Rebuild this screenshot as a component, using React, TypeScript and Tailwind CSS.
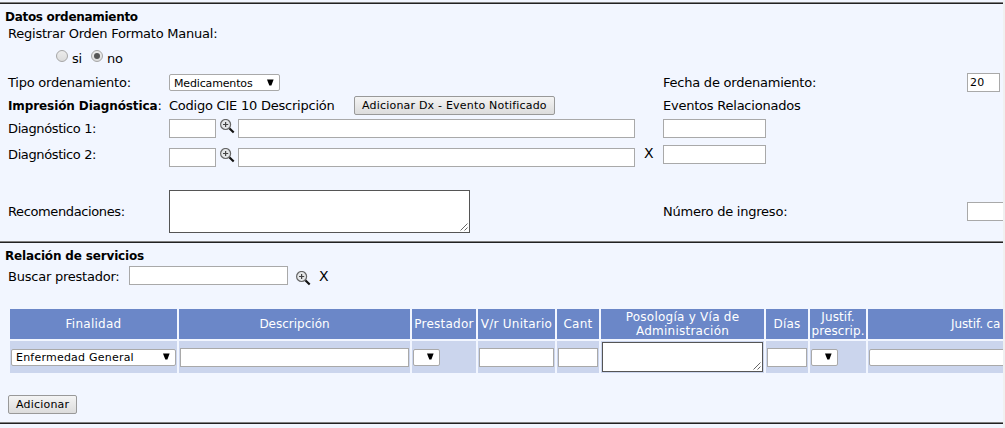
import React from "react";

const field = "block shrink-0 h-[19px] border border-[#a9a9a9] bg-white outline-none px-[2px] text-[11px]";

function Field({ className = "", value }: { className?: string; value?: string }) {
  return <input type="text" defaultValue={value} className={`${field} ${className}`} />;
}

function Picker({ label, className = "" }: { label?: string; className?: string }) {
  return (
    <button
      type="button"
      className={`flex h-[17px] shrink-0 items-center justify-between overflow-hidden rounded-[2px] border border-[#a9a9a9] bg-white pl-1 text-[11px] leading-none whitespace-nowrap ${className}`}
    >
      <span className="pt-px">{label}</span>
      <svg width="7" height="7" viewBox="0 0 7 7" className="mr-[5px] mb-px shrink-0">
        <path d="M0 0.5h6.6L4.4 6.5H2.3z" fill="#000" />
      </svg>
    </button>
  );
}

function TextBox({ className = "" }: { className?: string }) {
  return (
    <div className={`flex shrink-0 items-end justify-end border border-[#555] bg-white p-px ${className}`}>
      <svg width="8" height="8" viewBox="0 0 8 8">
        <path d="M0.5 7.5l7-7M4.5 7.5l3-3" stroke="#666" strokeWidth="1" fill="none" />
      </svg>
    </div>
  );
}

function PushButton({ children, className = "" }: { children: React.ReactNode; className?: string }) {
  return (
    <button
      type="button"
      className={`h-[19px] shrink-0 rounded-[2px] border border-[#999] bg-linear-to-b from-[#f4f4f4] to-[#dcdcdc] pt-px pl-[7px] text-left text-[11px] leading-4 tracking-[0.2px] whitespace-nowrap ${className}`}
    >
      {children}
    </button>
  );
}

function Magnifier({ className = "" }: { className?: string }) {
  return (
    <svg width="15" height="15" viewBox="0 0 15 15" className={`shrink-0 ${className}`}>
      <path d="M9.3 9.3l4.4 4.2" stroke="#111" strokeWidth="2.2" />
      <circle cx="5.6" cy="5.5" r="5" fill="#e4e6e8" stroke="#666" strokeWidth="1.2" />
      <path d="M5.6 2.9v5.2M3 5.5h5.2" stroke="#444" strokeWidth="1.2" />
    </svg>
  );
}

function Radio({ checked }: { checked?: boolean }) {
  return (
    <span className="flex size-3 shrink-0 items-center justify-center rounded-full border border-[#a6a6a6] bg-linear-to-b from-[#ececec] to-[#dcdcdc]">
      {checked && <span className="size-[6px] rounded-full bg-[#555]" />}
    </span>
  );
}

function Rule() {
  return <div className="h-[2px] shrink-0 border-t border-[#808080] bg-[#222]" />;
}

const head = "flex shrink-0 items-center justify-center overflow-hidden bg-[#6b87c8] text-center leading-[14px] text-white whitespace-nowrap";
const cell = "flex shrink-0 items-center overflow-hidden bg-[#cbd5ed] px-px";
const columns = "grid w-[993px] grid-cols-[167px_231px_64px_77px_42px_163px_42px_56px_135px] gap-[2px]";

export default function App() {
  return (
    <div className="h-[428px] w-[1005px] overflow-hidden bg-[#f0f0f0] pr-[2px] font-['DejaVu_Sans',sans-serif] text-[13px] leading-4 text-black">
      <div className="flex h-[428px] flex-col overflow-hidden bg-[#f2f6ff] pt-[2px] tracking-[-0.23px] whitespace-nowrap">
        <Rule />
        <section className="h-[237px] shrink-0">
          <h2 className="h-[21px] pt-[5px] pl-[5px] text-[12px] font-bold tracking-[-0.3px]">Datos ordenamiento</h2>
          <p className="h-[22px] pt-px pl-2">Registrar Orden Formato Manual:</p>
          <div className="flex h-6 items-start pt-[3px] pl-14">
            <Radio />
            <span className="mt-px ml-[4px] w-[19px]">si</span>
            <Radio checked />
            <span className="mt-px ml-[4px]">no</span>
          </div>
          <div className="flex h-[25px] items-start pt-[2px] pl-2">
            <span className="mt-[2px] w-[161px] shrink-0">Tipo ordenamiento:</span>
            <Picker label="Medicamentos" className="mt-px w-[111px] tracking-[-0.15px]" />
            <span className="mt-[2px] ml-[383px] w-[304px] shrink-0">Fecha de ordenamiento:</span>
            <Field value="20" className="w-[33px] tracking-[0.2px]" />
          </div>
          <div className="flex h-[23px] items-start pl-2">
            <span className="mt-[2px] w-[161px] shrink-0"><b className="text-[12px] tracking-[-0.1px]">Impresión Diagnóstica</b>:</span>
            <span className="mt-[2px] w-[185px] shrink-0">Codigo CIE 10 Descripción</span>
            <PushButton className="w-[201px]">Adicionar Dx - Evento Notificado</PushButton>
            <span className="mt-[2px] ml-[108px]">Eventos Relacionados</span>
          </div>
          <div className="flex h-[26px] items-start pl-2">
            <span className="mt-[2px] w-[161px] shrink-0 tracking-[-0.38px]">Diagnóstico 1:</span>
            <Field className="w-[47px]" />
            <Magnifier className="ml-[4px]" />
            <Field className="ml-[3px] w-[397px]" />
            <Field className="ml-[28px] w-[103px]" />
          </div>
          <div className="flex h-[45px] items-start pl-2">
            <span className="mt-[2px] w-[161px] shrink-0 tracking-[-0.38px]">Diagnóstico 2:</span>
            <Field className="mt-[3px] w-[47px]" />
            <Magnifier className="mt-[3px] ml-[4px]" />
            <Field className="mt-[3px] ml-[3px] w-[397px]" />
            <span className="ml-[9px] w-[19px] shrink-0 text-[14px]">X</span>
            <Field className="w-[103px]" />
          </div>
          <div className="flex h-[43px] items-center pl-2">
            <span className="w-[161px] shrink-0 tracking-[-0.38px]">Recomendaciones:</span>
            <TextBox className="h-[43px] w-[301px]" />
            <span className="ml-[193px] w-[304px] shrink-0">Número de ingreso:</span>
            <Field className="w-[100px]" />
          </div>
        </section>
        <Rule />
        <section className="h-[179px] shrink-0">
          <h2 className="h-[23px] pt-[5px] pl-[5px] text-[12px] font-bold tracking-[-0.16px]">Relación de servicios</h2>
          <div className="flex h-[43px] items-start pl-2">
            <span className="mt-[3px] w-[121px] shrink-0">Buscar prestador:</span>
            <Field className="w-[159px]" />
            <Magnifier className="mt-[5px] ml-[8px]" />
            <span className="mt-[2px] ml-[8px] text-[14px]">X</span>
          </div>
          <div className="pl-[10px]">
            <div className={`${columns} h-[30px] text-[12px] tracking-[0.25px]`}>
              <div className={head}>Finalidad</div>
              <div className={`${head} tracking-normal`}>Descripción</div>
              <div className={head}>Prestador</div>
              <div className={head}>V/r Unitario</div>
              <div className={head}>Cant</div>
              <div className={head}>Posología y Vía de<br />Administración</div>
              <div className={head}>Días</div>
              <div className={`${head} tracking-[0.1px]`}>Justif.<br />prescrip.</div>
              <div className={`${head} justify-start pl-[83px] tracking-[-0.1px]`}>Justif. ca</div>
            </div>
            <div className={`${columns} mt-[2px] h-[32px]`}>
              <div className={cell}><Picker label="Enfermedad General" className="w-[165px] tracking-[0.22px]" /></div>
              <div className={cell}><Field className="w-[229px]" /></div>
              <div className={cell}><Picker className="w-[27px]" /></div>
              <div className={cell}><Field className="w-[75px]" /></div>
              <div className={cell}><Field className="w-[40px]" /></div>
              <div className={cell}><TextBox className="h-[30px] w-[161px]" /></div>
              <div className={cell}><Field className="w-[40px]" /></div>
              <div className={cell}><Picker className="w-[27px]" /></div>
              <div className={cell}><Picker className="w-[298px]" /></div>
            </div>
          </div>
          <div className="pt-[22px] pl-2">
            <PushButton className="w-[69px]">Adicionar</PushButton>
          </div>
        </section>
        <Rule />
      </div>
    </div>
  );
}
